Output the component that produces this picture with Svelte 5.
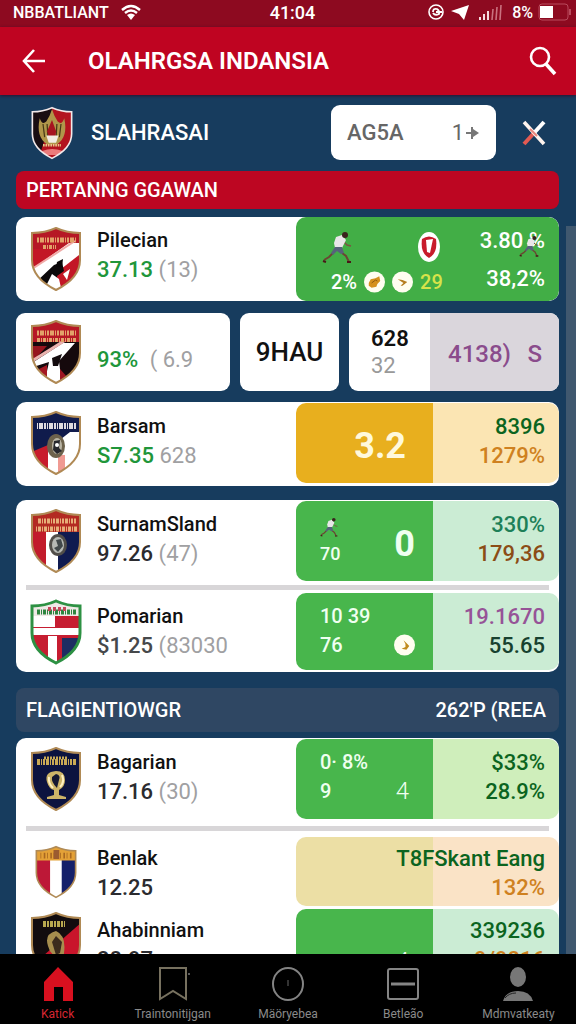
<script lang="ts">
	type Tone = 'green' | 'dark' | 'slate';

	const tabs = [
		{ id: 'home', label: 'Katick' },
		{ id: 'saved', label: 'Traintonitijgan' },
		{ id: 'clock', label: 'Mäöryebea' },
		{ id: 'board', label: 'Betleão' },
		{ id: 'profile', label: 'Mdmvatkeaty' }
	];

	let activeTab = $state('home');
</script>

<svelte:head>
	<title>Olahrgsa Indansia</title>
</svelte:head>

{#snippet crest(kind: string)}
	<svg class="crest {kind}" viewBox="0 0 54 66" aria-hidden="true">
		<defs>
			<clipPath id="shield-{kind}">
				<path d="M27 2 Q38 7 51 7 V34 Q51 52 27 64 Q3 52 3 34 V7 Q16 7 27 2Z" />
			</clipPath>
		</defs>
		<g clip-path="url(#shield-{kind})">
			{#if kind === 'garuda'}
				<rect width="54" height="66" fill="#b3131f" />
				<path d="M0 0H27V12L12 60H0Z" fill="#190d12" />
				<path d="M12 15Q15 24 20 19L24 12L27 4L30 12L34 19Q39 24 42 15Q47 38 33 47H21Q7 38 12 15Z" fill="#b0964a" />
				<path d="M16 22L18 38M21 22L22 38M33 22L32 38M38 22L36 38" stroke="#453716" stroke-width="1.5" />
				<path d="M27 17L32 31L31 38H23L21 31Z" fill="#a61320" />
				<path d="M20 36H35L32 45H23Z" fill="#f1ece3" />
				<path d="M16 48H38" stroke="#e6ca88" stroke-width="3" stroke-dasharray="2 1" />
				<path d="M15 55Q27 50 40 55L36 60H18Z" fill="#eb7b7b" />
			{:else if kind === 'stripe' || kind === 'stripe-dark'}
				<rect width="54" height="66" fill={kind === 'stripe' ? '#c31726' : '#15090c'} />
				<path d="M0 0H54V23H0Z" fill="#b61825" />
				{#if kind === 'stripe'}
					<path d="M0 45L40 17H54V26L14 57Z" fill="#fff" />
					<path d="M3 43L46 15" stroke="#f0aaa7" stroke-width="2" />
					<path d="M7 56L25 39L33 36L35 45L28 50L30 66H10Z" fill="#0c090b" />
					<path d="M14 66L23 48L30 53L33 66Z" fill="#fff" />
					<path d="M34 48L41 43L38 54Z" fill="#fff" />
					<path d="M28 36L34 33L33 41L27 41Z" fill="#080608" />
				{:else}
					<path d="M0 27H18L6 40H0Z" fill="#96151e" />
					<path d="M0 46L34 24L46 24L30 42L33 66H15L20 43L4 48Z" fill="#fff" />
					<path d="M3 42L35 22" stroke="#eab2ae" stroke-width="3" />
					<path d="M23 39L33 35L29 47L24 47Z" fill="#130b0d" />
					<path d="M10 50L18 46V66H14Z" fill="#a51822" />
					<path d="M31 50L39 59L31 64Z" fill="#9d1622" />
				{/if}
				<path d="M8 14H47" stroke="#e2a36a" stroke-width="5" stroke-dasharray="2 1 4 1 1 1" />
				<path d={kind === 'stripe' ? 'M14 21H27' : 'M8 21H48'} stroke="#e2a36a" stroke-width="4" stroke-dasharray="3 1 1 1" />
			{:else if kind === 'navy'}
				<rect width="54" height="66" fill="#fff" />
				<path d="M0 0H54V22L41 22L18 40L0 50Z" fill="#101b4c" />
				<path d="M0 43L19 35V66H0Z" fill="#c81c2c" />
				<path d="M29 45H36V66H29Z" fill="#f09a92" />
				<path d="M8 16H48" stroke="#e0dce0" stroke-width="6" stroke-dasharray="1 1 4 1 2 1" />
				<ellipse cx="27" cy="36" rx="9" ry="12" fill="#6d624c" />
				<ellipse cx="28" cy="36" rx="5" ry="8" fill="#b9b4a4" />
				<path d="M25 31L31 30L30 38L33 41L28 44L24 40Z" fill="#26262c" />
				<circle cx="28" cy="35" r="2" fill="#fff" />
			{:else if kind === 'tricolor'}
				<path d="M0 0H17V66H0Z" fill="#c21b2b" />
				<path d="M17 0H29V66H17Z" fill="#fff" />
				<path d="M29 0H54V66H29Z" fill="#101b50" />
				<path d="M0 0H54V24H0Z" fill="#b32a22" />
				<path d="M9 13H47" stroke="#e7ae78" stroke-width="5" stroke-dasharray="3 1 1 1 2 1" />
				<path d="M7 21H49" stroke="#e7ae78" stroke-width="5" stroke-dasharray="1 1 3 1" />
				<ellipse cx="29" cy="37" rx="9" ry="11" fill="#514e49" />
				<ellipse cx="29" cy="37" rx="6" ry="8" fill="#b6b9b4" />
				<path d="M27 32L32 31L34 38L29 44L25 40L29 38Z" fill="#41484a" />
			{:else if kind === 'cross'}
				<rect width="54" height="66" fill="#c61d31" />
				<path d="M0 0H54V17H0Z" fill="#efe9e6" />
				<path d="M0 17H26V28H0Z" fill="#fff" />
				<path d="M33 39H54V66H33Z" fill="#1d2d62" />
				<path d="M0 29H54V36H0ZM19 37H28V66H19Z" fill="#fff" />
				<path d="M8 13H47" stroke="#2e8540" stroke-width="5" stroke-dasharray="3 1 1 1" />
				<path d="M19 10H37" stroke="#c4485a" stroke-width="4" stroke-dasharray="3 2" />
			{:else if kind === 'cup'}
				<rect width="54" height="66" fill="#0c133f" />
				<path d="M8 16H47" stroke="#c9a955" stroke-width="6" stroke-dasharray="3 1 1 1 2 1" />
				<path d="M15 12H39" stroke="#c9a955" stroke-width="3" stroke-dasharray="2 1" />
				<path d="M27 25Q15 26 18 36Q20 43 25 44V49L18 51V53H37V51L30 49V44Q36 41 36 34Q36 25 27 25Z" fill="#cdb468" />
				<path d="M27 28Q32 29 30 34L28 42Q22 36 23 31Z" fill="#151831" />
				<path d="M20 31Q19 37 24 42M33 29Q36 36 31 41" fill="none" stroke="#fff1c1" stroke-width="2" />
			{:else if kind === 'gold'}
				<path d="M0 0H20V66H0Z" fill="#bd1837" />
				<path d="M20 0H34V66H20Z" fill="#fff" />
				<path d="M34 0H54V66H34Z" fill="#15206a" />
				<path d="M0 0H54V19H0Z" fill="#e4a137" />
				<path d="M8 13H47" stroke="#a96821" stroke-width="7" stroke-dasharray="1 3 2 2" />
				<path d="M24 6H31V17H24Z" fill="#9b5b30" />
			{:else}
				<rect width="54" height="66" fill="#120c0e" />
				<path d="M54 10L14 45L18 66H54Z" fill="#c9152b" />
				<path d="M14 13H36" stroke="#b9a94f" stroke-width="6" stroke-dasharray="3 1 2 1" />
				<path d="M27 20Q15 23 19 35Q21 43 27 45V52L34 48Q39 25 27 20Z" fill="#a78e4e" />
				<path d="M27 25L33 31L31 42L27 44L23 31Z" fill="#3a2a1d" />
				<circle cx="35" cy="49" r="5" fill="#efb1a8" />
			{/if}
		</g>
		<path class="rim" d="M27 2 Q38 7 51 7 V34 Q51 52 27 64 Q3 52 3 34 V7 Q16 7 27 2Z" />
	</svg>
{/snippet}

{#snippet runner(size: string)}
	<svg class="runner {size}" viewBox="0 0 30 32" aria-hidden="true">
		<path d="M21 10L25 14L29 15" fill="none" stroke="#7c5343" stroke-width="1.5" />
		<path d="M11 22L7 26L2 29M20 22L24 25L27 31" fill="none" stroke="#6b4632" stroke-width="2" />
		<path d="M14 6L20 4L24 9L20 17L13 17L12 12Z" fill="#e9e6e9" />
		<path d="M13 16L20 16L22 22L19 23L15 20L11 24L9 22Z" fill="#56627a" />
		<circle cx="23" cy="4" r="3" fill="#3a221d" />
		<path d="M1 30L4 31M25 31L29 31" stroke="#4a1718" stroke-width="2" />
	</svg>
{/snippet}

{#snippet coin(shape: string)}
	<svg class="coin" viewBox="0 0 22 22" aria-hidden="true">
		<circle cx="11" cy="11" r="11" fill="#fffdf0" />
		{#if shape === 'ball'}
			<path d="M5 12L7 8L12 7L16 5L17 10L14 13L13 16L8 17L5 15Z" fill="#d5901d" />
			<path d="M8 12L12 9L14 10" fill="none" stroke="#8a5711" stroke-width="1" />
		{:else if shape === 'arrow'}
			<path d="M6 8L11 9L16 11L11 15L9 15L12 12Z" fill="#b57d21" />
		{:else}
			<path d="M10 6L12 10L12 13L8 15L13 16L16 12L13 9Z" fill="#c08a1c" />
		{/if}
	</svg>
{/snippet}

{#snippet team(kind: string, name: string, value: string, note: string, tone: Tone)}
	<div class="team">
		{@render crest(kind)}
		<div class="lines">
			<h3>{name}</h3>
			<p><span class="value {tone}">{value}</span> <span class="note">{note}</span></p>
		</div>
	</div>
{/snippet}

<div class="app">
	<div class="status">
		<span class="carrier">NBBATLIANT
			<svg width="20" height="16" viewBox="0 0 20 16" aria-hidden="true">
				<path d="M1 6Q10 -2 19 6M4 9Q10 4 16 9" fill="none" stroke="#fff" stroke-width="2.4" />
				<path d="M6 11Q10 8 14 11L10 16Z" fill="#fff" />
			</svg>
		</span>
		<span class="time">41:04</span>
		<span class="signals">
			<svg width="80" height="18" viewBox="0 0 80 18" aria-hidden="true">
				<circle cx="9" cy="9" r="7" fill="none" stroke="#fff" stroke-width="1.6" />
				<path d="M6 9Q6 5 10 6Q13 8 12 11Q8 13 6 10M9 9H15" fill="none" stroke="#fff" stroke-width="1.8" />
				<path d="M24 8L42 2L37 17L32 11Z" fill="#fff" />
				<path d="M53 17V14M57 17V11M61 17V8" stroke="#f5d9dd" stroke-width="2" />
				<path d="M65 17L66 6M69 17L70 4M73 17L74 2" stroke="#c9727f" stroke-width="1.6" />
			</svg>
			8%
			<svg width="34" height="18" viewBox="0 0 34 18" aria-hidden="true">
				<rect x="1" y="1" width="29" height="16" rx="3" fill="none" stroke="#b94a5c" />
				<rect x="2" y="3" width="13" height="12" fill="#fff" />
				<path d="M32 6V12" stroke="#b94a5c" stroke-width="2" />
			</svg>
		</span>
	</div>

	<header>
		<button class="icon-btn" aria-label="Back">
			<svg width="24" height="26" viewBox="0 0 24 26">
				<path d="M12 2L2 13L12 24M2 13H23" fill="none" stroke="#fff" stroke-width="2.6" />
			</svg>
		</button>
		<h1>OLAHRGSA INDANSIA</h1>
		<button class="icon-btn" aria-label="Search">
			<svg width="28" height="30" viewBox="0 0 28 30">
				<circle cx="11" cy="11" r="9" fill="none" stroke="#fff" stroke-width="2.6" />
				<path d="M17 18L26 28" stroke="#fff" stroke-width="3.6" />
			</svg>
		</button>
	</header>

	<main>
		<div class="club">
			{@render crest('garuda')}
			<h2>SLAHRASAI</h2>
			<button class="picker"><span>AG5A</span><span class="step">1<svg width="16" height="16" viewBox="0 0 16 16" aria-hidden="true">
				<path d="M2 8H13M8 2V14" stroke="#777" stroke-width="2" /><path d="M9 4L15 8L9 12Z" fill="#777" />
			</svg></span></button>
			<button class="icon-btn" aria-label="Close">
				<svg width="24" height="26" viewBox="0 0 24 26">
					<path d="M22 2L12 13" stroke="#fff" stroke-width="4" />
					<path d="M12 13L2 24" stroke="#e35a52" stroke-width="4" />
					<path d="M2 2L22 24" stroke="#fff4ee" stroke-width="3.6" />
					<path d="M8 9L15 16" stroke="#e8857c" stroke-width="2" />
				</svg>
			</button>
		</div>

		<h2 class="bar red">PERTANNG GGAWAN</h2>

		<section class="card first">
			<div class="row">
				{@render team('stripe', 'Pilecian', '37.13', '(13)', 'green')}
				<div class="panel match">
					<div class="play">
						<div class="line figures">
							{@render runner('large')}
							<svg class="oval" viewBox="0 0 22 30" aria-hidden="true">
								<ellipse cx="11" cy="15" rx="11" ry="15" fill="#fff" />
								<path d="M4 7Q11 2 18 7Q20 21 11 26Q2 21 4 7Z" fill="#c81c2c" />
								<path d="M8 8L15 7L12 21L9 20Z" fill="#fff" />
							</svg>
						</div>
						<div class="line">
							<span>2%</span>
							{@render coin('ball')}
							{@render coin('arrow')}
							<span class="lime">29</span>
						</div>
					</div>
					<div class="side">
						<p class="marked">3.80 %{@render runner('over')}</p>
						<p>38,2%</p>
					</div>
				</div>
			</div>
		</section>

		<div class="tiles">
			<section class="tile">
				{@render crest('stripe-dark')}
				<p><span class="value green">93%</span> <span class="note">( 6.9</span></p>
			</section>
			<section class="tile code">9HAU</section>
			<section class="tile pair">
				<div class="stack"><b>628</b><span>32</span></div>
				<div class="violet"><span>4138)</span><span>S</span></div>
			</section>
		</div>

		<section class="card third">
			<div class="row">
				{@render team('navy', 'Barsam', 'S7.35', '628', 'green')}
				<div class="panel">
					<div class="mid amber"><span class="score shifted">3.2</span></div>
					<div class="side cream">
						<p class="forest">8396</p>
						<p class="orange">1279%</p>
					</div>
				</div>
			</div>
		</section>

		<section class="card">
			<div class="row">
				{@render team('tricolor', 'SurnamSland', '97.26', '(47)', 'dark')}
				<div class="panel">
					<div class="mid">
						<div class="left">
							{@render runner('small')}
							<span class="small">70</span>
						</div>
						<span class="score">0</span>
					</div>
					<div class="side mint">
						<p class="teal">330%</p>
						<p class="brown">179,36</p>
					</div>
				</div>
			</div>
			<hr />
			<div class="row tight">
				{@render team('cross', 'Pomarian', '$1.25', '(83030', 'slate')}
				<div class="panel">
					<div class="mid">
						<div class="left"><span>10 39</span><span>76</span></div>
						<div class="low">{@render coin('hand')}</div>
					</div>
					<div class="side mint">
						<p class="purple">19.1670</p>
						<p class="pine">55.65</p>
					</div>
				</div>
			</div>
		</section>

		<h2 class="bar slate-bar"><span>FLAGIENTIOWGR</span><span>262'P (REEA</span></h2>

		<section class="card last">
			<div class="row">
				{@render team('cup', 'Bagarian', '17.16', '(30)', 'dark')}
				<div class="panel">
					<div class="mid">
						<div class="left"><span>0· 8%</span><span>9</span></div>
						<span class="thin">4</span>
					</div>
					<div class="side lime-bg">
						<p class="forest">$33%</p>
						<p class="forest">28.9%</p>
					</div>
				</div>
			</div>
			<hr />
			<div class="row short">
				{@render team('gold', 'Benlak', '12.25', '', 'dark')}
				<div class="panel">
					<div class="mid sand"></div>
					<div class="side peach">
						<p class="forest">T8FSkant Eang</p>
						<p class="orange">132%</p>
					</div>
				</div>
			</div>
			<div class="row short">
				{@render team('rebel', 'Ahabinniam', '28.97', '', 'dark')}
				<div class="panel">
					<div class="mid"><span class="thin">4</span></div>
					<div class="side mint">
						<p class="forest">339236</p>
						<p class="orange">9/9816</p>
					</div>
				</div>
			</div>
		</section>

		<div class="thumb"></div>
	</main>

	<nav>
		{#each tabs as tab}
			<a href="#{tab.id}" class:active={activeTab === tab.id} onclick={() => (activeTab = tab.id)}>
				<svg width="34" height="36" viewBox="0 0 34 36" aria-hidden="true">
					{#if tab.id === 'home'}
						<path d="M17 1L32 16V35H22V21H13V35H3V16Z" fill="#d8101f" />
					{:else if tab.id === 'saved'}
						<path d="M4 2H30V33L17 25L4 33Z" fill="none" stroke="#77715f" stroke-width="2" />
						<circle cx="33" cy="8" r="1" fill="#777" />
					{:else if tab.id === 'clock'}
						<ellipse cx="17" cy="18" rx="15" ry="16" fill="none" stroke="#838383" stroke-width="2" />
						<path d="M17 14V20" stroke="#666" stroke-width="1" />
					{:else if tab.id === 'board'}
						<rect x="2" y="3" width="30" height="30" rx="2" fill="none" stroke="#858585" stroke-width="2" />
						<path d="M5 18H29" stroke="#858585" stroke-width="3" />
					{:else}
						<ellipse cx="17" cy="11" rx="8" ry="10" fill="#777" />
						<path d="M2 35Q5 25 17 25Q29 25 32 35Z" fill="#777" />
						<path d="M4 32Q8 27 15 27" fill="none" stroke="#222" stroke-width="1" />
					{/if}
				</svg>
				<span>{tab.label}</span>
			</a>
		{/each}
	</nav>
</div>

<style>
	:global(body) {
		margin: 0;
		background: #173c5e;
		font-family: Roboto, 'Liberation Sans', sans-serif;
	}

	h1, h2, h3, p {
		margin: 0;
		white-space: nowrap;
	}

	button {
		border: none;
		padding: 0;
		background: none;
		font-family: inherit;
		cursor: pointer;
	}

	.app {
		display: flex;
		flex-direction: column;
		height: 100vh;
		overflow: hidden;
	}

	.status {
		display: grid;
		grid-template-columns: 1fr auto 1fr;
		align-items: center;
		height: 27px;
		padding: 0 4px 3px 13px;
		box-sizing: border-box;
		background: #8d0a20;
		color: #fff;
		font-size: 16px;
		font-weight: 500;
		white-space: nowrap;
	}

	.time {
		font-size: 18px;
	}

	.carrier,
	.signals {
		display: flex;
		align-items: center;
		gap: 12px;
	}

	.signals {
		justify-content: flex-end;
		gap: 5px;
	}

	header {
		display: flex;
		align-items: center;
		height: 68px;
		padding: 0 19px 0 22px;
		background: #bf0421;
		box-shadow: 0 1px 3px #2a1230;
	}

	header h1 {
		flex: 1;
		margin-left: 42px;
		color: #fff;
		font-size: 24px;
		font-weight: 600;
	}

	.icon-btn {
		display: flex;
	}

	main {
		position: relative;
		flex: 1;
		min-height: 0;
		overflow: hidden;
		padding: 10px 17px 0 16px;
	}

	.thumb {
		position: absolute;
		top: 131px;
		right: 0;
		bottom: 0;
		width: 10px;
		background: #40586f;
	}

	.club {
		display: flex;
		align-items: center;
		padding: 0 13px;
		margin-bottom: 11px;
	}

	.club h2 {
		flex: 1;
		margin-left: 16px;
		color: #fff;
		font-size: 22px;
		font-weight: 500;
	}

	.picker {
		display: flex;
		align-items: center;
		justify-content: space-between;
		width: 165px;
		height: 55px;
		margin-right: 26px;
		padding: 0 16px;
		box-sizing: border-box;
		border-radius: 9px;
		background: #fff;
		color: #666;
		font-size: 22px;
		font-weight: 500;
	}

	.step {
		display: flex;
		align-items: center;
		font-weight: 400;
	}

	.bar {
		display: flex;
		align-items: center;
		justify-content: space-between;
		height: 38px;
		padding: 0 13px 0 10px;
		border-radius: 8px;
		color: #fff;
		font-size: 20px;
		font-weight: 500;
	}

	.red {
		background: #bd0622;
	}

	.slate-bar {
		height: 44px;
		background: #2f4763;
	}

	.card {
		margin: 14px 0 16px;
		overflow: hidden;
		border-radius: 10px;
		background: #fff;
	}

	.first {
		margin: 8px 0 12px;
	}

	.third {
		margin: 11px 0 14px;
	}

	.last {
		margin: 6px 0 0;
	}

	.row {
		display: grid;
		grid-template-columns: 280fr 263fr;
		min-height: 84px;
	}

	.card:not(.first) .row {
		min-height: 80px;
		padding: 1px 0 3px;
	}

	.card .row.tight {
		min-height: 77px;
		padding: 1px 0 2px;
	}

	.card .row.short {
		min-height: 69px;
		padding: 0 0 3px;
	}

	hr {
		height: 5px;
		margin: 1px 10px 2px;
		border: none;
		background: #d8d6d8;
	}

	.last hr {
		margin: 4px 10px 6px;
	}

	.team {
		display: flex;
		align-items: center;
		gap: 14px;
		min-width: 0;
		padding-left: 13px;
	}

	.lines {
		align-self: flex-start;
		padding-top: 9px;
	}

	.short .lines,
	.short .side {
		padding-top: 7px;
	}

	.crest {
		flex: none;
		width: 54px;
		height: 66px;
	}

	.crest.garuda {
		width: 46px;
		height: 54px;
	}

	.crest.gold {
		width: 46px;
		height: 54px;
		margin: 0 4px;
	}

	.rim {
		fill: none;
		stroke: #b08a55;
		stroke-width: 2;
	}

	.garuda .rim {
		stroke: #f2e9ea;
	}

	.cross .rim {
		stroke: #2d9143;
		stroke-width: 3;
	}

	h3 {
		color: #111;
		font-size: 20px;
		font-weight: 500;
		line-height: 29px;
	}

	.lines p,
	.tile p {
		font-size: 22px;
		line-height: 29px;
	}

	.value {
		font-weight: 500;
	}

	.value.green {
		color: #20963a;
	}

	.value.dark {
		color: #2b2b2f;
	}

	.value.slate {
		color: #46484b;
	}

	.note {
		color: #a0a0a2;
	}

	.panel {
		display: grid;
		grid-template-columns: minmax(0, 137fr) minmax(0, 126fr);
		overflow: hidden;
		border-radius: 10px;
	}

	.match {
		grid-template-columns: 1fr auto;
		background: #42ae46;
		color: #fff;
		font-size: 20px;
		font-weight: 500;
	}

	.play {
		display: flex;
		flex-direction: column;
		justify-content: space-between;
		padding: 14px 0 7px 26px;
	}

	.line {
		display: flex;
		align-items: center;
		gap: 7px;
		padding-left: 9px;
	}

	.figures {
		gap: 66px;
		padding-left: 0;
	}

	.lime {
		color: #d7e34a;
	}

	.runner.large {
		width: 30px;
		height: 32px;
	}

	.runner.small {
		width: 18px;
		height: 22px;
	}

	.oval {
		width: 22px;
		height: 30px;
	}

	.coin {
		width: 21px;
		height: 22px;
	}

	.side {
		padding: 9px 14px 0 0;
		font-size: 22px;
		font-weight: 500;
		line-height: 29px;
	}

	/* long labels run out over the middle column */
	.side p {
		display: flex;
		justify-content: flex-end;
	}

	.match .side {
		line-height: 38px;
		padding-top: 5px;
	}

	.marked {
		position: relative;
	}

	.marked :global(.over) {
		position: absolute;
		right: 6px;
		top: 12px;
		width: 20px;
		height: 24px;
	}

	.mid {
		display: flex;
		justify-content: space-between;
		padding: 9px 18px 0 24px;
		background: #48b64c;
		color: #effff0;
		font-size: 20px;
		font-weight: 500;
		line-height: 29px;
	}

	.left {
		display: flex;
		flex-direction: column;
	}

	.left .runner {
		margin: 6px 0 1px;
	}

	.small {
		font-size: 18px;
	}

	.low {
		display: flex;
		align-items: flex-end;
		padding-bottom: 14px;
	}

	.score {
		align-self: center;
		padding-bottom: 3px;
		margin-left: auto;
		font-size: 36px;
		font-weight: 700;
	}

	.shifted {
		margin-right: 9px;
	}

	.thin {
		margin: 29px 6px 0 auto;
		font-size: 24px;
		font-weight: 300;
	}

	.amber { background: #e8af1e; color: #fff9dc; }
	.sand { background: #ecdfa5; }
	.cream { background: #fbe5b3; }
	.mint { background: #cbecd4; }
	.lime-bg { background: #cfeebb; }
	.peach { background: #fae3c6; }

	.forest { color: #0b6420; }
	.orange { color: #cf8120; }
	.teal { color: #1d8058; }
	.brown { color: #8b4d16; }
	.purple { color: #965397; }
	.pine { color: #17412f; }

	.tiles {
		display: grid;
		grid-template-columns: 214fr 99fr 210fr;
		gap: 10px;
	}

	.tile {
		display: flex;
		align-items: center;
		gap: 14px;
		height: 78px;
		min-width: 0;
		overflow: hidden;
		border-radius: 9px;
		background: #fff;
	}

	.tile > :global(.crest) {
		margin-left: 13px;
	}

	.tile p {
		padding-top: 14px;
	}

	.tile .note {
		margin-left: 6px;
	}

	.code {
		justify-content: center;
		color: #111;
		font-size: 26px;
		font-weight: 500;
	}

	.pair {
		align-items: stretch;
		gap: 0;
	}

	.stack {
		display: flex;
		flex: 81;
		flex-direction: column;
		padding: 12px 0 0 22px;
		box-sizing: border-box;
		color: #999;
		font-size: 22px;
		line-height: 27px;
	}

	.stack b {
		color: #111;
		font-weight: 600;
	}

	.violet {
		display: flex;
		flex: 129;
		align-items: center;
		justify-content: space-between;
		padding: 3px 17px 0 18px;
		background: #dad6dc;
		color: #8a4c8c;
		font-size: 24px;
		font-weight: 500;
	}

	nav {
		z-index: 1;
		display: grid;
		grid-template-columns: repeat(5, 1fr);
		height: 70px;
		background: #000;
	}

	nav a {
		display: flex;
		flex-direction: column;
		align-items: center;
		gap: 2px;
		padding-top: 12px;
		color: #8a8a8a;
		font-size: 12px;
		line-height: 20px;
		text-decoration: none;
	}

	nav a.active {
		color: #d82632;
	}
</style>
